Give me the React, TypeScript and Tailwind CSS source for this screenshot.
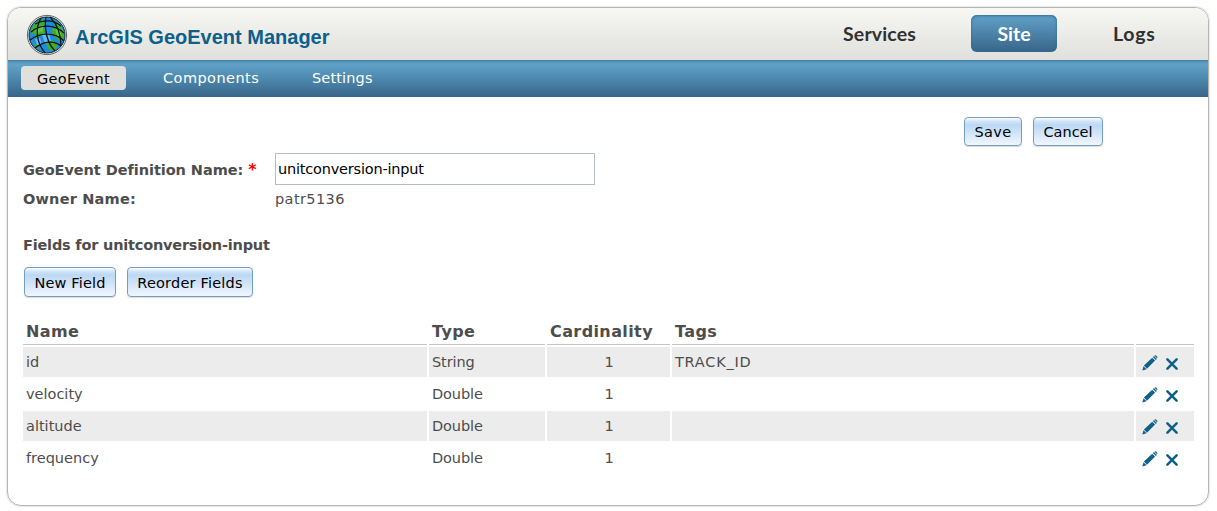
import React from "react";

const fields = [
  { name: "id", type: "String", cardinality: 1, tags: "TRACK_ID" },
  { name: "velocity", type: "Double", cardinality: 1, tags: "" },
  { name: "altitude", type: "Double", cardinality: 1, tags: "" },
  { name: "frequency", type: "Double", cardinality: 1, tags: "" },
];

function Globe() {
  return (
    <svg viewBox="0 0 42 42" className="h-[42px] w-[42px] shrink-0" fill="none">
      <circle cx="21" cy="21" r="19.6" fill="#f5f5f2" stroke="#555" strokeWidth=".9" />
      <circle cx="21" cy="21" r="18" fill="#1e8be0" />
      <path d="M4 18C7 10 11 6 17 5L20 9L17 14L20 17L16 21L10 24L8 20ZM26 5C33 8 38 14 38 22L35 28L29 24L25 17L29 12ZM20 29L27 26L32 31L27 37L22 35ZM6 28L12 31L13 36Z" fill="#3fae2b" />
      <path d="M9 15L17 11L17 17L10 20ZM29 14L33 15L36 22L31 22Z" fill="#64c63c" />
      <path d="M16 20L23 19L25 27L19 30ZM9 25L14 24L16 31L11 31Z" fill="#62b7f5" />
      <g stroke="#08131a" strokeWidth="1.3">
        <path d="M15 4C9 14 10 28 19 39M20 3C18 15 21 29 29 37M24 3C31 10 35 21 35 32" />
        <path d="M9 10C18 5 28 6 35 12M5 18C14 10 28 10 38 19M4 26C14 18 29 18 38 27M9 34C18 27 28 26 35 32" />
      </g>
      <circle cx="21" cy="21" r="18" stroke="#13232b" strokeWidth="1" />
    </svg>
  );
}

function Pencil() {
  return (
    <svg viewBox="0 0 16 16" className="h-4 w-4" fill="#11608a">
      <path d="M.3 15.4L1.5 11.2L4.6 14.2ZM1.9 10.6L10.2 2.8L13.1 5.6L5 13.7ZM10.9 2.1L11.9 1.1L14.8 3.9L13.8 4.9ZM12.5.7L13.2.2C14 0 15.9 1.7 15.4 2.6L15 3.3Z" />
    </svg>
  );
}

function Cross() {
  return (
    <svg viewBox="0 0 12 12" className="h-3 w-3" stroke="#11608a" strokeWidth="2.5" strokeLinecap="round">
      <path d="M1.4 1.4L10.6 10.6M10.6 1.4L1.4 10.6" />
    </svg>
  );
}

function Button({ children, className }: { children: React.ReactNode; className: string }) {
  return (
    <button
      className={`shrink-0 rounded-[4px] border border-[#759dc0] bg-[linear-gradient(#fff_0,#d5e6f9_3px,#bcd8f4_7px,#f0f6fe_100%)] pt-px text-center whitespace-nowrap text-black shadow-[0_1px_1px_rgba(0,0,0,0.15)] ${className}`}
    >
      {children}
    </button>
  );
}

export default function App() {
  return (
    <div className="h-[511px] w-[1217px] bg-white pt-[7px] pl-[7px] font-['DejaVu_Sans',sans-serif] text-[14.5px] leading-[18px] text-[#4d4d4d]">
      <div className="h-[499px] w-[1202px] overflow-hidden rounded-[14px] border border-[#b5b5b5] shadow-[0_0_2px_rgba(0,0,0,0.3)]">
        <header className="flex h-[52px] bg-linear-to-b from-[#f7f8f3] to-[#dfe0db]">
          <div className="flex w-[795px] items-start pt-[6px] pl-[18px]">
            <Globe />
            <h1 className="mt-[10px] ml-[7px] font-['Liberation_Sans',sans-serif] text-[20px] leading-[26px] font-bold whitespace-nowrap text-[#0d5f8c]">
              ArcGIS GeoEvent Manager
            </h1>
          </div>
          <nav className="flex pt-[7px] font-['Lato',sans-serif] text-[19.5px] leading-[37px] font-bold text-[#303030]">
            <a className="w-[152px] pl-10 tracking-[0.15px]">Services</a>
            <a className="ml-4 h-[37px] w-[86px] rounded-[6px] bg-linear-to-b from-[#62a2c9] to-[#386589] text-center text-white shadow-[inset_0_1px_3px_#2c6c98,inset_0_0_1px_#2c7eae]">
              Site
            </a>
            <a className="ml-14 tracking-[0.7px]">Logs</a>
          </nav>
        </header>

        <nav className="flex h-[37px] bg-[linear-gradient(#417a9f_0,#5594bb_2px,#62a2c9_4px,#4b85aa_55%,#386589_100%)] pt-[6px] pl-[13px] text-white">
          <a className="h-6 w-[105px] rounded-[4px] bg-[#e0e1dd] pt-1 text-center tracking-[0.3px] text-black">GeoEvent</a>
          <a className="ml-[37px] w-[149px] pt-[3px] tracking-[0.45px]">Components</a>
          <a className="pt-[3px] tracking-[0.15px]">Settings</a>
        </nav>

        <main className="pl-[15px]">
          <div className="flex gap-[11px] pt-5 pl-[941px]">
            <Button className="h-[29px] w-[58px] tracking-[0.3px]">Save</Button>
            <Button className="h-[29px] w-[70px]">Cancel</Button>
          </div>

          <div className="mt-[7px] flex h-8 items-center">
            <label className="w-[252px] pt-px font-bold tracking-[-0.05px] whitespace-nowrap">
              GeoEvent Definition Name: <span className="text-[16px] leading-4 text-[#f00]">*</span>
            </label>
            <input
              className="h-8 w-80 border border-[#b5bcc7] pl-[2px] tracking-[-0.2px] text-black outline-none"
              defaultValue="unitconversion-input"
            />
          </div>
          <div className="mt-[5px] flex">
            <span className="w-[252px] font-bold tracking-[0.2px]">Owner Name:</span>
            <span className="tracking-[0.4px]">patr5136</span>
          </div>

          <h2 className="mt-7 font-bold tracking-[-0.2px]">Fields for unitconversion-input</h2>
          <div className="mt-[13px] flex gap-[11px] pl-px">
            <Button className="h-[30px] w-[92px] tracking-[0.15px]">New Field</Button>
            <Button className="h-[30px] w-[126px] tracking-[0.2px]">Reorder Fields</Button>
          </div>

          <div className="mt-[21px] grid w-[1171px] grid-cols-[404px_116px_123px_462px_58px] gap-[2px]">
            {["Name", "Type", "Cardinality", "Tags", ""].map((title) => (
              <div
                key={title}
                className="h-[27px] border-b border-[#c5c5c5] pt-[3px] pl-[3px] text-[16px] leading-[21px] font-bold tracking-[0.4px] whitespace-nowrap"
              >
                {title}
              </div>
            ))}
            {fields.map((field, i) => {
              const cell = `h-[30px] pt-[6px] ${i % 2 === 0 ? "bg-[#ececec]" : ""}`;
              return (
                <React.Fragment key={field.name}>
                  <div className={`${cell} pl-[3px]`}>{field.name}</div>
                  <div className={`${cell} pl-[3px] tracking-[-0.1px]`}>{field.type}</div>
                  <div className={`${cell} pl-px text-center`}>{field.cardinality}</div>
                  <div className={`${cell} pl-[3px] tracking-[0.75px]`}>{field.tags}</div>
                  <div className={`${cell} flex pl-[3px]`}>
                    <span className="mt-[2px] ml-[3px]"><Pencil /></span>
                    <span className="mt-[5px] ml-2"><Cross /></span>
                  </div>
                </React.Fragment>
              );
            })}
          </div>
        </main>
      </div>
    </div>
  );
}
